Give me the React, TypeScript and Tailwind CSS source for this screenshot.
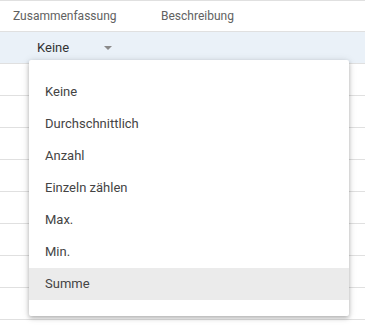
import React from "react";

const items = ["Keine", "Durchschnittlich", "Anzahl", "Einzeln zählen", "Max.", "Min.", "Summe"];

export default function App() {
  return (
    <div
      className="relative w-[365px] h-[331px] bg-white overflow-hidden"
      style={{ fontFamily: "Roboto, 'Liberation Sans', sans-serif" }}
    >
      <div className="border-t border-[#e0e0e0]">
        <div className="h-[31px] flex items-center border-b border-[#e0e0e0] text-[12px] text-[#616161]">
          <div className="pl-[13px] w-[161px]">Zusammenfassung</div>
          <div>Beschreibung</div>
        </div>
        <div className="h-[32px] flex items-center bg-[#eaf1f8] border-b border-[#e0e0e0] text-[13px] text-[#333333]">
          <div className="pl-[37px] w-[104px]">Keine</div>
          <div className="w-0 h-0 border-l-[4px] border-r-[4px] border-t-[4px] border-l-transparent border-r-transparent border-t-[#8a8a8a]" />
        </div>
        {Array.from({ length: 8 }).map((_, i) => (
          <div key={i} className="h-[32px] border-b border-[#e0e0e0]" />
        ))}
      </div>
      <div className="absolute left-[29px] top-[60px] w-[320px] py-[16px] bg-white rounded-[2px] shadow-[0_2px_4px_rgba(0,0,0,0.25),0_1px_8px_rgba(0,0,0,0.12)]">
        {items.map((t) => (
          <div
            key={t}
            className={`h-[32px] flex items-center pl-[16px] text-[13px] text-[#444444] ${t === "Summe" ? "bg-[#ebebeb]" : ""}`}
          >
            {t}
          </div>
        ))}
      </div>
    </div>
  );
}
